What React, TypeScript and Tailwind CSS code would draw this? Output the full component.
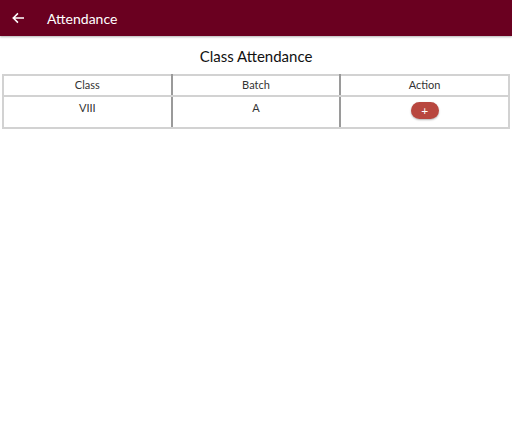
import React from 'react';

const App = () => {
  const cell = 'w-1/3 border-2 border-[#d2d2d2]';
  return (
    <div className="w-[512px] h-[426px] bg-white font-['Lato','Open_Sans',sans-serif]">
      <div className="h-9 bg-[#6a0020] flex items-center shadow-[0_1px_2px_rgba(0,0,0,0.3)]">
        <svg className="ml-[11px] w-[14px] h-[14px]" viewBox="0 0 24 24" fill="none" stroke="white" strokeWidth="2.6" strokeLinecap="square">
          <path d="M21 12H4M11 5l-7 7 7 7" />
        </svg>
        <div className="ml-[22px] text-white text-[14px]">Attendance</div>
      </div>
      <div className="pt-[10px] text-center text-[15px] text-[#111] leading-5">Class Attendance</div>
      <div className="px-[2px] mt-[8px]">
        <table className="w-full border-collapse text-[11px] text-[#333]">
          <thead>
            <tr className="h-[21px]">
              <th className={`${cell} border-r-[#9a9a9a] font-normal`}>Class</th>
              <th className={`${cell} border-r-[#9a9a9a] font-normal`}>Batch</th>
              <th className={`${cell} font-normal`}>Action</th>
            </tr>
          </thead>
          <tbody>
            <tr className="h-[32px]">
              <td className={`${cell} border-r-[#9a9a9a] text-center align-top pt-[3px]`}>VIII</td>
              <td className={`${cell} border-r-[#9a9a9a] text-center align-top pt-[3px]`}>A</td>
              <td className={`${cell} text-center align-top pt-[5px]`}>
                <button className="w-[28px] h-[17px] rounded-full bg-[#b8473f] text-white text-[12px] leading-[17px] inline-flex items-center justify-center shadow-[0_1px_2px_rgba(0,0,0,0.3)]">+</button>
              </td>
            </tr>
          </tbody>
        </table>
      </div>
    </div>
  );
};

export default App;
